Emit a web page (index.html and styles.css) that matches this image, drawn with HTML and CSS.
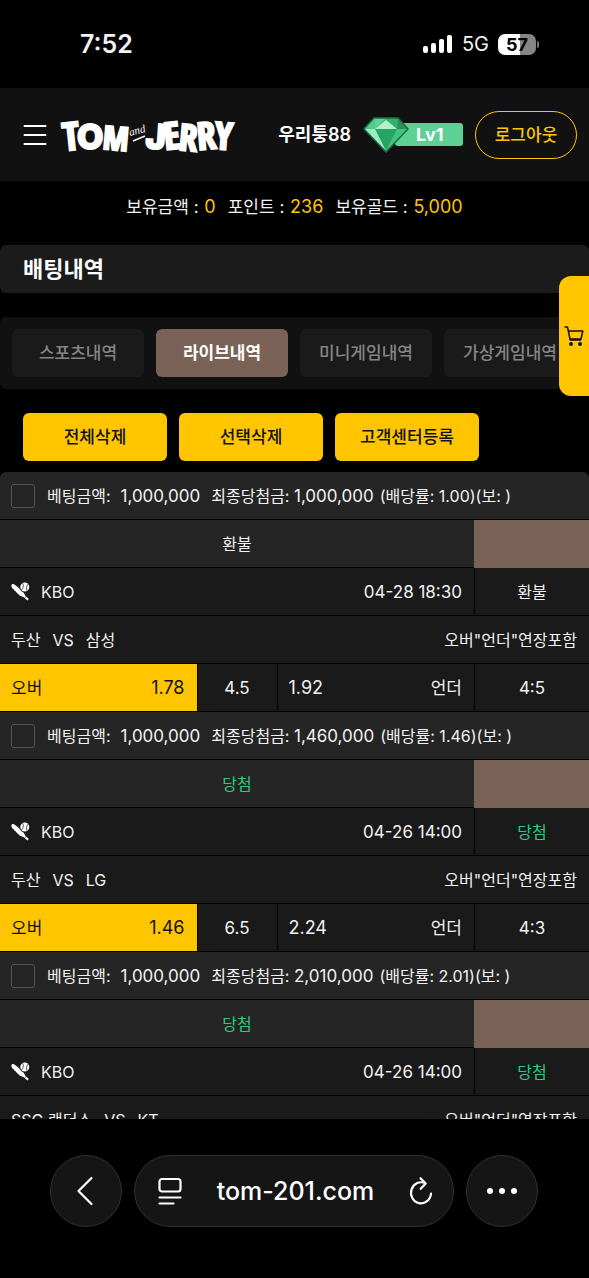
FILE: index.html
```html
<!DOCTYPE html>
<html lang="ko">
<head>
<meta charset="utf-8">
<meta name="viewport" content="width=device-width, initial-scale=1">
<title>배팅내역</title>
<link rel="stylesheet" href="styles.css">
</head>
<body>
<svg class="defs" aria-hidden="true">
  <symbol id="baseball" viewBox="0 0 19 19">
    <path d="M.4 3.600C.5 2 2.200 1.600 3.800 2.700L12 9.300l2.200 4.200 3.700 3.400-1.500 1.500-3.700-3.200-4.100-1.700L1.100 6Q.3 5.200.4 3.600Z" fill="#fff"/>
    <circle cx="13.800" cy="5.200" r="5.300" fill="#1a1a1a"/>
    <circle cx="13.800" cy="5" r="4.500" fill="#fff"/>
    <path d="M11.600 1.200c1.300 2.200.9 5.200-1.100 6.800M17.200 2c-1.600 1.400-2.200 4.300-1 7" stroke="#1a1a1a" stroke-width=".7" fill="none"/>
    <path d="M13.800 15.800l1.900-1.900" stroke="#1a1a1a" stroke-width=".8"/>
  </symbol>
</svg>
<div class="screen">
  <div class="status">
    <time class="clock">7:52</time>
    <div class="signals">
      <svg width="30" height="20" viewBox="0 0 30 20" fill="#fff" aria-hidden="true"><rect y="12" width="5" height="7" rx="2"/><rect x="8" y="9" width="5" height="10" rx="2"/><rect x="16" y="5" width="5" height="14" rx="2"/><rect x="24" y="1" width="5" height="18" rx="2"/></svg>
      <span class="network">5G</span>
      <span class="battery"><span class="battery-level">57</span></span>
    </div>
  </div>
  <main class="page">
    <header class="header">
      <button class="menu" aria-label="메뉴"><svg width="24" height="22" viewBox="0 0 24 22" stroke="#fff" stroke-width="2" stroke-linecap="round"><path d="M1.500 2h21M1.500 11h21M1.500 20h21"/></svg></button>
      <a class="logo" href="#" aria-label="Tom and Jerry">
        <svg width="176" height="42" viewBox="0 0 176 42">
          <g class="logo-letters">
            <text transform="translate(5 37) rotate(-6)" font-size="39">T</text>
            <text class="logo-wide" transform="translate(18 35)" font-size="34">O</text>
            <text transform="translate(43 35) rotate(5)" font-size="33">M</text>
            <text class="logo-wide" transform="translate(86 34) rotate(4)" font-size="34">J</text>
            <text transform="translate(106 36) rotate(-6)" font-size="38">E</text>
            <text transform="translate(119 36) rotate(5)" font-size="37">R</text>
            <text transform="translate(139 36) rotate(-5)" font-size="38">R</text>
            <text transform="translate(155 35) rotate(4)" font-size="38">Y</text>
          </g>
          <text class="logo-and" transform="translate(71 22) rotate(-15)">and</text>
          <path d="M74 27l12-5" stroke="#fff" stroke-width="1.500"/>
        </svg>
      </a>
      <div class="account">
        <strong class="user">우리퉁88</strong>
        <div class="level">
          <svg class="gem" width="46" height="36" viewBox="0 0 46 36" stroke-linejoin="round" aria-hidden="true">
            <path d="M11 1h24l10 11-22 23L1 12Z" fill="#3cb574"/>
            <path d="M11 1 1 12h11Z" fill="#4fcb89"/><path d="M11 1h12L12 12Z" fill="#5fd196"/><path d="M23 1h12l-1 11Z" fill="#32b16c"/><path d="M35 1l10 11H34Z" fill="#27945a"/>
            <path d="M23 3l11 9H12Z" fill="#b5f0cd"/><path d="M12 12h22L23 34Z" fill="#27a363"/><path d="M1 12h11l11 22Z" fill="#9aedbd"/><path d="M34 12h11L23 34Z" fill="#45c27d"/>
            <path d="M11 1h24l10 11-22 23L1 12Z" fill="none" stroke="#14713c" stroke-width="1.500"/>
          </svg>
          <span class="level-name">Lv1</span>
        </div>
        <button class="logout">로그아웃</button>
      </div>
    </header>
    <div class="balances">
      <span>보유금액 : <b>0</b></span><span>포인트 : <b>236</b></span><span>보유골드 : <b>5,000</b></span>
    </div>
    <h1 class="title">배팅내역</h1>
    <nav class="tabs">
      <button class="tab">스포츠내역</button>
      <button class="tab tab-active">라이브내역</button>
      <button class="tab">미니게임내역</button>
      <button class="tab">가상게임내역</button>
    </nav>
    <div class="actions">
      <button class="action">전체삭제</button>
      <button class="action">선택삭제</button>
      <button class="action">고객센터등록</button>
    </div>
    <section class="bets">
      <article class="bet">
        <label class="row summary"><input type="checkbox" class="check"><span class="stake">베팅금액:</span><span class="amount stake-value">1,000,000</span><span>최종당첨금: <span class="amount">1,000,000</span></span><span class="rate">(배당률: 1.00)(보: )</span></label>
        <div class="row result"><span class="cell">환불</span><span class="cell accent"></span></div>
        <div class="row league"><span class="cell split"><span class="name"><svg class="sport" aria-hidden="true"><use href="#baseball"/></svg>KBO</span><time class="amount">04-28 18:30</time></span><span class="cell">환불</span></div>
        <div class="row split"><span class="teams"><span>두산</span><span>VS</span><span>삼성</span></span><span>오버"언더"연장포함</span></div>
        <div class="row odds"><span class="cell split picked"><span>오버</span><span class="price">1.78</span></span><span class="cell small">4.5</span><span class="cell split"><span class="price">1.92</span><span>언더</span></span><span class="cell small">4:5</span></div>
      </article>
      <article class="bet">
        <label class="row summary"><input type="checkbox" class="check"><span class="stake">베팅금액:</span><span class="amount stake-value">1,000,000</span><span>최종당첨금: <span class="amount">1,460,000</span></span><span class="rate">(배당률: 1.46)(보: )</span></label>
        <div class="row result win"><span class="cell">당첨</span><span class="cell accent"></span></div>
        <div class="row league"><span class="cell split"><span class="name"><svg class="sport" aria-hidden="true"><use href="#baseball"/></svg>KBO</span><time class="amount">04-26 14:00</time></span><span class="cell win">당첨</span></div>
        <div class="row split"><span class="teams"><span>두산</span><span>VS</span><span>LG</span></span><span>오버"언더"연장포함</span></div>
        <div class="row odds"><span class="cell split picked"><span>오버</span><span class="price">1.46</span></span><span class="cell small">6.5</span><span class="cell split"><span class="price">2.24</span><span>언더</span></span><span class="cell small">4:3</span></div>
      </article>
      <article class="bet">
        <label class="row summary"><input type="checkbox" class="check"><span class="stake">베팅금액:</span><span class="amount stake-value">1,000,000</span><span>최종당첨금: <span class="amount">2,010,000</span></span><span class="rate">(배당률: 2.01)(보: )</span></label>
        <div class="row result win"><span class="cell">당첨</span><span class="cell accent"></span></div>
        <div class="row league"><span class="cell split"><span class="name"><svg class="sport" aria-hidden="true"><use href="#baseball"/></svg>KBO</span><time class="amount">04-26 14:00</time></span><span class="cell win">당첨</span></div>
        <div class="row split"><span class="teams"><span>SSG 랜더스</span><span>VS</span><span>KT</span></span><span>오버"언더"연장포함</span></div>
      </article>
    </section>
    <button class="cart" aria-label="장바구니"><svg width="20" height="20" viewBox="0 0 20 20" fill="none" stroke="#111" stroke-width="1.500" stroke-linejoin="round"><path d="M.5 1h3l2.700 13h11M4.200 5h14.600l-1.800 8H6"/><circle cx="7" cy="18" r="1.200" fill="#111"/><circle cx="16" cy="18" r="1.200" fill="#111"/></svg></button>
  </main>
  <footer class="browser">
    <button class="round" aria-label="뒤로"><svg width="20" height="30" viewBox="0 0 20 30" fill="none" stroke="#fff" stroke-width="2.200" stroke-linecap="round" stroke-linejoin="round"><path d="M15.500 2 2.500 15l13 13"/></svg></button>
    <div class="address">
      <button class="icon" aria-label="페이지 메뉴"><svg width="24" height="28" viewBox="0 0 24 28" fill="none" stroke="#fff" stroke-width="2.200" stroke-linecap="round"><rect x="1.500" y="2" width="21" height="12.500" rx="2.500"/><path d="M1.500 20.500h21M1.500 26.500h14"/></svg></button>
      <a class="url" href="#">tom-201.com</a>
      <button class="icon" aria-label="새로고침"><svg width="24" height="28" viewBox="0 0 24 28" fill="none" stroke="#fff" stroke-width="2.200" stroke-linecap="round" stroke-linejoin="round"><path d="M22 16.500A10 10.500 0 1 1 16.500 6.400M11.500 1.200l5.200 5.300-5 5.300"/></svg></button>
    </div>
    <button class="round" aria-label="더보기"><svg width="30" height="6" viewBox="0 0 30 6" fill="#fff"><circle cx="3" cy="3" r="3"/><circle cx="15" cy="3" r="3"/><circle cx="27" cy="3" r="3"/></svg></button>
  </footer>
</div>
</body>
</html>
```
FILE: styles.css
```css
* { box-sizing: border-box; }
body {
  margin: 0;
  background: #000;
  color: #f2f2f2;
  font-family: Inter, "Noto Sans CJK KR", sans-serif;
  font-size: 16px;
  line-height: 24px;
}
button {
  margin: 0;
  padding: 0;
  border: 0;
  background: none;
  color: inherit;
  font: inherit;
}
svg { display: block; flex: none; overflow: visible; }
a { color: inherit; text-decoration: none; }
.defs { position: absolute; width: 0; height: 0; }
.screen { display: flex; flex-direction: column; height: 100vh; overflow: hidden; }

.status {
  display: flex;
  flex: none;
  align-items: center;
  justify-content: space-between;
  height: 88px;
  padding: 0 53px 0 80px;
}
.clock { font-size: 25px; font-weight: 600; }
.signals { display: flex; align-items: center; gap: 9px; }
.network { font-size: 20px; }
.battery {
  position: relative;
  width: 38px;
  height: 21px;
  border-radius: 7px;
  background: linear-gradient(90deg, #fff 57%, #858585 57%);
  color: #000;
  font-size: 18px;
  font-weight: 700;
  line-height: 21px;
  text-align: center;
}
.battery::after {
  content: "";
  position: absolute;
  top: 7px;
  right: -3px;
  width: 2px;
  height: 7px;
  border-radius: 0 2px 2px 0;
  background: #777;
}

.page { position: relative; flex: 1; min-height: 0; overflow: hidden; }
.header {
  display: flex;
  align-items: center;
  height: 93px;
  padding: 0 12px 0 23px;
  background: #111;
}
.logo { margin-left: 12px; }
.logo-letters {
  fill: #fff;
  stroke: #fff;
  stroke-width: 2px;
  font-family: "Liberation Sans Narrow", "Open Sans Condensed", "DejaVu Sans Condensed", sans-serif;
  font-weight: 700;
}
.logo-wide {
  font-family: Inter, sans-serif;
  font-weight: 800;
}
.logo-and {
  fill: #fff;
  font-family: "Liberation Serif", serif;
  font-size: 11px;
  font-style: italic;
  font-weight: 400;
}
.account { display: flex; align-items: center; gap: 12px; margin-left: auto; }
.user { color: #fff; font-size: 18px; font-weight: 600; }
.level { display: flex; align-items: center; }
.gem { position: relative; }
.level-name {
  width: 68px;
  height: 23px;
  margin-left: -14px;
  padding-left: 21px;
  border-radius: 3px;
  background: #5cd095;
  color: #fff;
  font-size: 18px;
  font-weight: 700;
  line-height: 23px;
}
.logout {
  width: 102px;
  height: 48px;
  border: 1px solid #ffc600;
  border-radius: 24px;
  color: #ffc600;
  font-size: 17px;
  font-weight: 500;
}

.balances {
  display: flex;
  justify-content: center;
  gap: 12px;
  padding: 14px 0 24px;
  font-size: 17px;
}
.balances b { margin-left: 1px; color: #ffc600; font-size: 18px; font-weight: 400; }
.title {
  margin: 2px 0 24px;
  padding: 0 23px;
  border-radius: 6px;
  background: #1b1b1b;
  color: #fff;
  font-size: 22px;
  font-weight: 600;
  line-height: 48px;
}
.tabs {
  display: flex;
  gap: 12px;
  padding: 12px;
  border-radius: 6px;
  background: #111;
  overflow: hidden;
}
.tab {
  flex: none;
  width: 132px;
  height: 48px;
  border-radius: 6px;
  background: #1a1a1a;
  color: #858585;
  font-size: 17px;
  font-weight: 500;
}
.tab-active { background: #7b6256; color: #fff; font-weight: 600; }
.actions { display: flex; gap: 12px; padding: 24px 23px 11px; }
.action {
  width: 144px;
  height: 48px;
  border-radius: 6px;
  background: #ffc600;
  color: #111;
  font-size: 17px;
  font-weight: 500;
}

.bets { border-radius: 6px; overflow: hidden; }
.row {
  display: flex;
  height: 48px;
  border-bottom: 1px solid #000;
  background: #1a1a1a;
  white-space: nowrap;
}
.split { align-items: center; justify-content: space-between; padding: 0 12px 0 11px; }
.row .cell { display: flex; flex: 1; align-items: center; justify-content: center; }
.row .cell + .cell { border-left: 1px solid #000; }
.row .cell.split { justify-content: space-between; }
.row .cell:last-child { flex: none; width: 115px; }
.summary { align-items: center; padding: 0 11px; background: #252525; }
.check {
  appearance: none;
  width: 24px;
  height: 24px;
  margin: 0 12px 0 0;
  border: 1px solid #555;
  border-radius: 3px;
}
.check:checked { background: #ffc600; }
.amount { font-size: 17px; }
.stake { margin-right: 10px; }
.stake-value { margin-right: 11px; }
.rate { margin-left: 6px; }
.result { background: #252525; }
.row .cell.accent { height: 48px; border-left: 0; background: #7b6256; }
.win { color: #2dcc78; }
.name { display: flex; align-items: center; gap: 11px; }
.sport { width: 19px; height: 19px; }
.teams { display: flex; gap: 12px; }
.odds { font-size: 17px; }
.price { font-size: 18px; }
.row .cell.picked { background: #ffc600; color: #111; }
.odds .small:nth-child(2) { flex: none; width: 80px; }

.cart {
  position: absolute;
  top: 188px;
  right: 0;
  display: grid;
  place-items: center;
  width: 30px;
  height: 120px;
  border-radius: 12px 0 0 12px;
  background: #ffc600;
}

.browser {
  display: flex;
  flex: none;
  gap: 12px;
  padding: 36px 51px 51px 50px;
}
.round, .address { height: 72px; border: 1px solid #303030; border-radius: 36px; background: #151515; }
.round { display: grid; flex: none; place-items: center; width: 72px; }
.address {
  display: flex;
  flex: 1;
  align-items: center;
  justify-content: space-between;
  padding: 0 20px 0 23px;
}
.url { color: #fff; font-size: 25px; font-weight: 500; }
```
